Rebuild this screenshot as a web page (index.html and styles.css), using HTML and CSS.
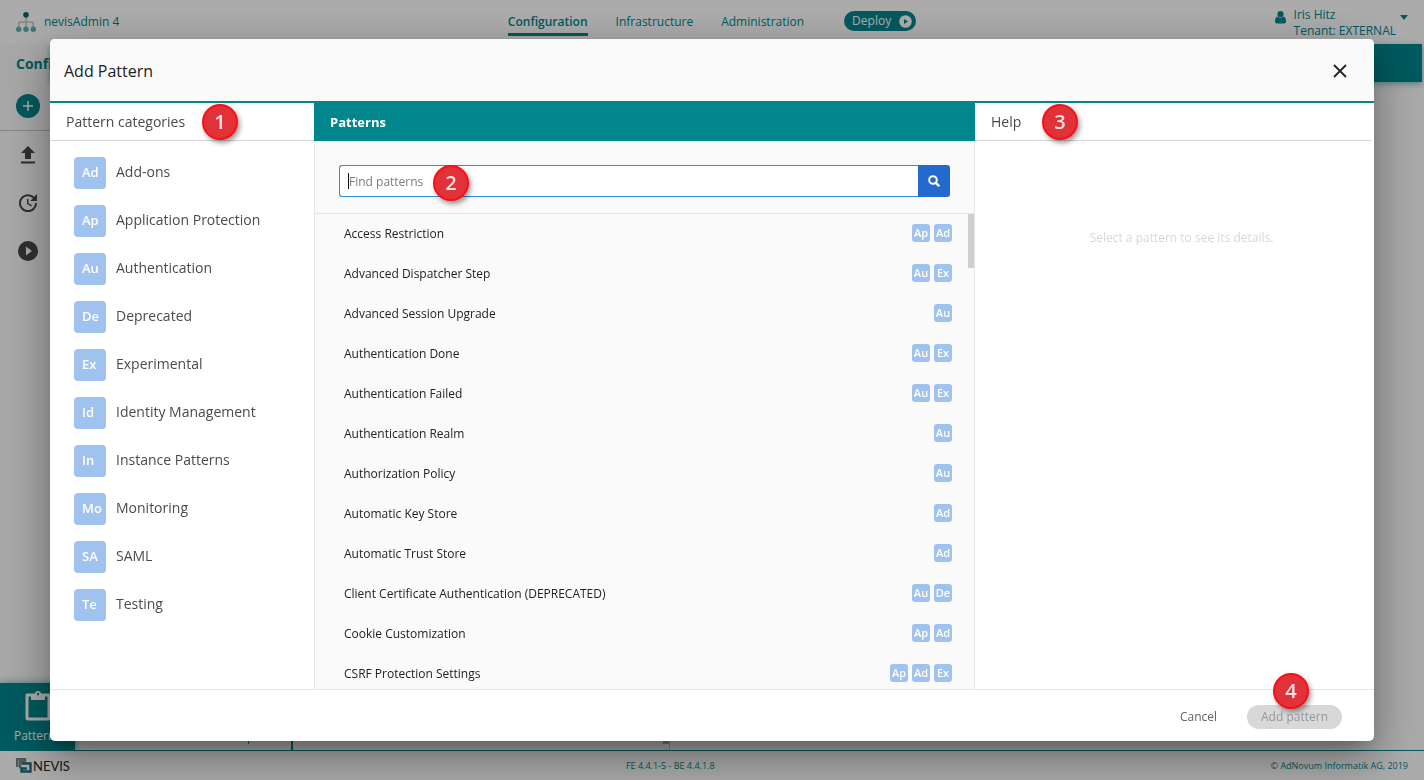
FILE: index.html
```html
<!DOCTYPE html>
<html lang="en">
<head>
<meta charset="utf-8">
<title>nevisAdmin 4</title>
<link rel="stylesheet" href="styles.css">
</head>
<body>
<div class="app">
  <header class="topbar">
    <a class="brand" href="#">
      <svg width="20" height="20" viewBox="0 0 20 20"><path d="M10 5v10M2.700 15v-3q0-2 2-2h10.600q2 0 2 2v3" fill="none" stroke="#c4c4c4" stroke-width="1.500"/><circle cx="10" cy="2.800" r="2.800" fill="#00666b"/><g fill="#5fb0b3"><circle cx="2.700" cy="17.200" r="2.700"/><circle cx="10" cy="17.200" r="2.700"/><circle cx="17.300" cy="17.200" r="2.700"/></g></svg>
      nevisAdmin 4
    </a>
    <nav class="nav">
      <a class="nav-link nav-link-active" href="#">Configuration</a>
      <a class="nav-link" href="#">Infrastructure</a>
      <a class="nav-link" href="#">Administration</a>
      <button class="deploy" type="button">Deploy
        <svg width="13" height="13" viewBox="0 0 13 13"><circle cx="6.500" cy="6.500" r="6.300" fill="#fff"/><path d="M5 4l4 2.500-4 2.500z" fill="#00868c"/></svg>
      </button>
    </nav>
    <div class="user">
      <svg width="11" height="13" viewBox="0 0 11 13" fill="#00868c"><circle cx="5.500" cy="3.200" r="3.100"/><path d="M2.200 5.600Q0 6.500 0 10.500 0 12.500 2 12.500h7q2 0 2-2 0-4-2.200-4.900-3.300 2.400-6.600 0z"/></svg>
      <div>Iris Hitz<br>Tenant: EXTERNAL</div>
      <svg width="8" height="5" viewBox="0 0 8 5"><path d="M0 0h8L4 5z" fill="#00868c"/></svg>
    </div>
  </header>

  <div class="workspace">
    <aside class="sidebar">
      <h1 class="sidebar-title">Configuration</h1>
      <button class="tool tool-add" type="button" aria-label="Add"><svg width="24" height="24" viewBox="0 0 24 24"><circle cx="12" cy="12" r="12" fill="#00868c"/><path d="M12 7v10M7 12h10" stroke="#fff" stroke-width="1.500"/></svg></button>
      <button class="tool" type="button" aria-label="Upload"><svg width="24" height="24" viewBox="0 0 24 24" fill="#444749"><path d="M9 16V10H5l7-7 7 7h-4v6zM5 18.500h14v2H5z"/></svg></button>
      <button class="tool" type="button" aria-label="History"><svg width="24" height="24" viewBox="0 0 24 24" fill="#444749"><path d="M21 10.120h-6.780l2.740-2.820c-2.730-2.700-7.150-2.800-9.880-.1-2.730 2.710-2.730 7.080 0 9.790s7.150 2.710 9.880 0C18.320 15.650 19 14.080 19 12.100h2c0 1.980-.88 4.550-2.640 6.290-3.510 3.480-9.210 3.480-12.720 0-3.500-3.470-3.530-9.110-.02-12.580s9.140-3.470 12.650 0L21 3v7.120zM12.500 8v4.250l3.500 2.080-.72 1.210L11 13V8h1.500z"/></svg></button>
      <button class="tool" type="button" aria-label="Run"><svg width="24" height="24" viewBox="0 0 24 24"><path d="M12 2a10 10 0 1 0 0 20 10 10 0 0 0 0-20zm-2 14.500v-9l6 4.500z" fill="#444749"/></svg></button>
    </aside>
    <main class="canvas"><div class="canvas-bar"></div></main>
  </div>

  <div class="dock">
    <a class="dock-tab" href="#">
      <svg width="26" height="31" viewBox="0 0 26 31"><path d="M2 5h22v23q0 1-1 1H3q-1 0-1-1z" fill="none" stroke="#fff" stroke-width="3" stroke-linejoin="round"/><path d="M6 4h4a3 3 0 0 1 6 0h4v6H6z" fill="#fff"/><circle cx="13" cy="4" r="1.200" fill="#00868c"/></svg>
      Patterns
    </a>
    <div class="dock-list"><span class="dock-tick"></span></div>
    <div class="dock-middle"><span class="dock-thumb"></span></div>
    <div class="dock-detail"></div>
  </div>

  <footer class="bottombar">
    <span class="logo">
      <svg width="16" height="15" viewBox="0 0 16 15"><path d="M1 9V1h8v2.500H4V9h1.500" fill="none" stroke="#7d8386" stroke-width="2.500"/><path d="M5.500 5.500h9v8h-9v-3H11" fill="none" stroke="#187078" stroke-width="2.400"/></svg>
      NEVIS
    </span>
    <span>FE 4.4.1-5 - BE 4.4.1.8</span>
    <span>© AdNovum Informatik AG, 2019</span>
  </footer>
</div>

<div class="overlay">
  <section class="dialog" role="dialog" aria-labelledby="dialog-title">
    <header class="dialog-header">
      <h2 class="dialog-title" id="dialog-title">Add Pattern</h2>
      <button class="close" type="button" aria-label="Close"><svg width="14" height="14" viewBox="0 0 14 14"><path d="M1 1l12 12M13 1L1 13" stroke="#222" stroke-width="1.800"/></svg></button>
    </header>
    <div class="columns">
      <section class="column">
        <h3 class="column-title">Pattern categories<span class="marker marker-categories">1</span></h3>
        <ul class="categories">
          <li><button class="category" type="button"><span class="tile">Ad</span><span class="category-name">Add-ons</span></button></li>
          <li><button class="category" type="button"><span class="tile">Ap</span><span class="category-name">Application Protection</span></button></li>
          <li><button class="category" type="button"><span class="tile">Au</span><span class="category-name">Authentication</span></button></li>
          <li><button class="category" type="button"><span class="tile">De</span><span class="category-name">Deprecated</span></button></li>
          <li><button class="category" type="button"><span class="tile">Ex</span><span class="category-name">Experimental</span></button></li>
          <li><button class="category" type="button"><span class="tile">Id</span><span class="category-name">Identity Management</span></button></li>
          <li><button class="category" type="button"><span class="tile">In</span><span class="category-name">Instance Patterns</span></button></li>
          <li><button class="category" type="button"><span class="tile">Mo</span><span class="category-name">Monitoring</span></button></li>
          <li><button class="category" type="button"><span class="tile">SA</span><span class="category-name">SAML</span></button></li>
          <li><button class="category" type="button"><span class="tile">Te</span><span class="category-name">Testing</span></button></li>
        </ul>
      </section>
      <section class="column column-patterns">
        <h3 class="column-title column-title-active">Patterns</h3>
        <form class="search">
          <input class="search-input" type="text" placeholder="Find patterns" aria-label="Find patterns">
          <span class="caret"></span>
          <button class="search-button" type="button" aria-label="Search"><svg width="12" height="12" viewBox="0 0 12 12" fill="none" stroke="#fff" stroke-width="2"><circle cx="5" cy="5" r="3.800"/><path d="M7.800 7.800l3.500 3.500" stroke-width="2.400"/></svg></button>
          <span class="marker marker-search">2</span>
        </form>
        <div class="results">
          <ul class="patterns">
            <li class="pattern">Access Restriction<span class="tags"><span class="tag">Ap</span><span class="tag">Ad</span></span></li>
            <li class="pattern">Advanced Dispatcher Step<span class="tags"><span class="tag">Au</span><span class="tag">Ex</span></span></li>
            <li class="pattern">Advanced Session Upgrade<span class="tags"><span class="tag">Au</span></span></li>
            <li class="pattern">Authentication Done<span class="tags"><span class="tag">Au</span><span class="tag">Ex</span></span></li>
            <li class="pattern">Authentication Failed<span class="tags"><span class="tag">Au</span><span class="tag">Ex</span></span></li>
            <li class="pattern">Authentication Realm<span class="tags"><span class="tag">Au</span></span></li>
            <li class="pattern">Authorization Policy<span class="tags"><span class="tag">Au</span></span></li>
            <li class="pattern">Automatic Key Store<span class="tags"><span class="tag">Ad</span></span></li>
            <li class="pattern">Automatic Trust Store<span class="tags"><span class="tag">Ad</span></span></li>
            <li class="pattern">Client Certificate Authentication (DEPRECATED)<span class="tags"><span class="tag">Au</span><span class="tag">De</span></span></li>
            <li class="pattern">Cookie Customization<span class="tags"><span class="tag">Ap</span><span class="tag">Ad</span></span></li>
            <li class="pattern">CSRF Protection Settings<span class="tags"><span class="tag">Ap</span><span class="tag">Ad</span><span class="tag">Ex</span></span></li>
          </ul>
          <span class="scroll-thumb"></span>
        </div>
      </section>
      <section class="column">
        <h3 class="column-title column-title-help">Help<span class="marker marker-help">3</span></h3>
        <p class="hint">Select a pattern to see its details.</p>
      </section>
    </div>
    <footer class="dialog-footer">
      <button class="button" type="button">Cancel</button>
      <span class="submit">
        <button class="button button-disabled" type="button" disabled>Add pattern</button>
        <span class="marker marker-submit">4</span>
      </span>
    </footer>
  </section>
</div>
</body>
</html>
```
FILE: styles.css
```css
* { box-sizing: border-box; }
body { margin: 0; font-family: "Open Sans", "Noto Sans", sans-serif; font-size: 12px; line-height: 16px; color: #222; }
h1, h2, h3, p, ul { margin: 0; padding: 0; list-style: none; }
button, input { font: inherit; color: inherit; border: 0; padding: 0; background: none; }
a { text-decoration: none; }
svg { display: block; flex: none; }

/* application behind the dialog */
.app { display: flex; flex-direction: column; height: 100vh; overflow: hidden; background: #fdfdfd; color: #00868c; }
.topbar { display: grid; grid-template-columns: 1fr auto 1fr; height: 44px; padding: 0 16px; background: #fff; }
.brand { display: flex; align-items: center; gap: 8px; color: inherit; }
.nav { display: flex; align-items: center; gap: 28px; }
.nav-link { padding-top: 2px; color: inherit; border-bottom: 3px solid transparent; line-height: 22px; }
.nav-link-active { font-weight: 600; border-color: #00868c; }
.deploy { display: flex; align-items: center; gap: 8px; height: 20px; margin: 0 0 2px 12px; padding: 0 4px 0 8px; border-radius: 10px; background: #00868c; color: #fff; }
.user { display: flex; justify-content: flex-end; gap: 8px; padding-top: 7px; }
.user svg { margin-top: 4px; }
.user svg:last-child { margin-top: 8px; }
.user div { margin-right: -4px; }
.workspace { flex: 1; display: flex; min-height: 0; }
.sidebar { width: 50px; display: flex; flex-direction: column; background: #fafafa; }
.sidebar-title { margin-left: 16px; padding: 10px 0; overflow: hidden; font-size: 14px; line-height: 20px; font-weight: 700; }
.tool { height: 48px; padding-left: 16px; }
.tool-add { height: 47px; padding-bottom: 2px; border-bottom: 1px solid #c8c8c8; }
.canvas { flex: 1; }
.canvas-bar { height: 38px; margin-right: 2px; background: #00868c; box-shadow: 0 2px 6px rgba(0, 134, 140, .5); }
.dock { display: flex; height: 68px; border-bottom: 1px solid #00868c; }
.dock-tab { display: flex; flex-direction: column; align-items: center; gap: 7px; width: 75px; padding: 7px 0; background: #00868c; color: #fff; box-shadow: 0 0 8px rgba(0, 134, 140, .6); }
.dock-list { position: relative; width: 218px; border-right: 2px solid #00868c; }
.dock-tick { position: absolute; right: 42px; bottom: 6px; width: 1px; height: 10px; background: #00868c; }
.dock-middle { position: relative; width: 377px; border-right: 1px solid #ccc; }
.dock-thumb { position: absolute; right: 0; bottom: 6px; width: 6px; height: 40px; background: #b4b4b4; }
.bottombar { display: flex; align-items: center; justify-content: space-between; height: 29px; padding: 0 16px; background: #fff; font-size: 9px; }
.logo { display: flex; align-items: center; gap: 1px; font-family: Lato, sans-serif; font-size: 13px; color: #22282b; }

/* dialog */
.overlay { position: fixed; inset: 0; display: flex; padding: 39px 50px; background: rgba(0, 0, 0, .33); }
.dialog { flex: 1; display: flex; flex-direction: column; min-width: 0; border-radius: 5px; background: #fff; box-shadow: 0 11px 15px -7px rgba(0, 0, 0, .2), 0 16px 44px 3px rgba(0, 0, 0, .36); }
.dialog-header { display: flex; align-items: center; justify-content: space-between; height: 64px; padding: 2px 27px 0 14px; border-bottom: 2px solid #00868c; border-radius: 5px 5px 0 0; background: #fafafa; }
.dialog-title { font-size: 16px; line-height: 24px; font-weight: 400; }
.columns { flex: 1; display: grid; grid-template-columns: 264px 1fr 399px; min-height: 0; }
.column { display: flex; flex-direction: column; min-width: 0; min-height: 0; }
.column-patterns { background: #fafafa; border: solid #e6e6e6; border-width: 0 1px; }
.column-title { position: relative; flex: none; height: 38px; padding: 0 16px; border-bottom: 1px solid #d6d6d6; font-size: 14px; line-height: 38px; font-weight: 400; color: #484b4e; }
.column-title-active { margin: 0 -1px; border-color: #00868c; background: #00868c; color: #fff; font-size: 13px; font-weight: 700; }
.column-title-help { margin-right: 2px; }

.categories { padding: 8px 0; }
.category { display: flex; align-items: center; gap: 10px; width: 100%; height: 48px; padding: 0 24px; font-size: 14px; color: #484b4e; }
.category-name { padding-bottom: 2px; }
.tile { flex: none; width: 32px; height: 32px; padding-left: 8px; border-radius: 4px; background: #9fc2ef; color: #fff; font-size: 13px; font-weight: 600; line-height: 30px; text-align: left; }

.search { position: relative; display: flex; padding: 24px 24px 16px; border-bottom: 1px solid #e6e6e6; }
.search-input { flex: 1; min-width: 0; height: 32px; padding: 0 9px; border: 1px solid #2f8fd8; border-right: 0; border-radius: 3px 0 0 3px; background: #fff; outline: 0; }
.search-input::placeholder { color: #777d83; opacity: 1; }
.search-button { display: grid; place-items: center; width: 32px; background: #2469cc; border-radius: 0 3px 3px 0; }
.caret { position: absolute; left: 33px; top: 32px; width: 1px; height: 16px; background: #111; }
.results { position: relative; flex: 1; min-height: 0; }
.patterns { height: 100%; overflow-y: auto; scrollbar-width: none; }
.pattern { display: flex; align-items: center; justify-content: space-between; height: 40px; padding: 0 22px 0 29px; }
.tags { display: flex; gap: 4px; padding-bottom: 2px; }
.tag { width: 18px; height: 18px; border-radius: 3px; background: #9fc2ef; color: #fff; font-size: 11px; line-height: 18px; font-weight: 600; text-align: center; }
.scroll-thumb { position: absolute; top: 0; right: 0; width: 6px; height: 54px; background: #cfcfcf; }
.hint { padding: 89px 0 0 14px; text-align: center; color: #d8d8d8; }

.dialog-footer { display: flex; align-items: center; justify-content: flex-end; gap: 16px; height: 52px; padding: 2px 32px 0; border-top: 1px solid #e6e6e6; }
.button { height: 24px; padding: 0 14px; border-radius: 12px; color: #5d636b; }
.button-disabled { background: #d8d8d8; color: #9298a1; }
.submit { position: relative; display: flex; }

/* numbered callouts */
.marker { position: absolute; width: 36px; height: 36px; border: 2px solid #fb0f14; border-radius: 50%; background: #e03238; color: #fbe3e4; box-shadow: 2px 3px 5px rgba(0, 0, 0, .4); font-size: 20px; line-height: 31px; font-weight: 600; text-align: center; }
.marker-categories { left: 152px; top: 1px; }
.marker-search { left: 118px; top: 24px; }
.marker-help { left: 67px; top: 1px; }
.marker-submit { left: 26px; bottom: 20px; }
```
